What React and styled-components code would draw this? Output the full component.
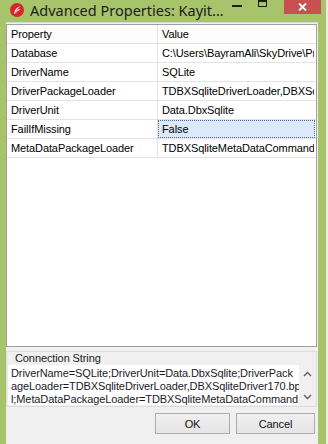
import React from "react";
import styled, { createGlobalStyle } from "styled-components";

const GlobalStyle = createGlobalStyle`
  html, body {
    margin: 0;
    padding: 0;
    background: #ececec;
  }
  #root {
    width: 328px;
    height: 444px;
    overflow: hidden;
  }
`;

const rows = [
  ["Database", "C:\\Users\\BayramAli\\SkyDrive\\Projects\\Kayit\\kayit.sqlite"],
  ["DriverName", "SQLite"],
  ["DriverPackageLoader", "TDBXSqliteDriverLoader,DBXSqliteDriver170.bpl"],
  ["DriverUnit", "Data.DbxSqlite"],
  ["FailIfMissing", "False", true],
  ["MetaDataPackageLoader", "TDBXSqliteMetaDataCommandFactory,DbxSqliteDriver170.bpl"],
];

const connLines = [
  "DriverName=SQLite;DriverUnit=Data.DbxSqlite;DriverPack",
  "ageLoader=TDBXSqliteDriverLoader,DBXSqliteDriver170.bp",
  "l;MetaDataPackageLoader=TDBXSqliteMetaDataCommand",
];

export default function App() {
  return (
    <>
      <GlobalStyle />
      <Window>
        <TitleBar>
          <AppIcon>
            <svg width="14" height="14" viewBox="0 0 14 14">
              <circle cx="7" cy="7" r="7" fill="#d7262b" />
              <path d="M4 11 C4.5 7 6.5 4.2 10.5 3 C9 4.5 8 5.5 7.6 6.6 C8.6 6.2 9.6 6 10.4 6.2 C9 7 7.6 8 6.4 9.6 C6 10.2 5.2 10.8 4 11 Z" fill="#fff" />
              <path d="M5 10.6 L8.8 4.6" stroke="#d7262b" strokeWidth="0.7" fill="none" />
            </svg>
          </AppIcon>
          <Title>Advanced Properties: Kayit...</Title>
          <Controls>
            <CtlBtn><MinGlyph /></CtlBtn>
            <CtlBtn><MaxGlyph /></CtlBtn>
            <CloseBtn>
              <svg width="9" height="8" viewBox="0 0 9 8">
                <path d="M1 0.5 L8 7.5 M8 0.5 L1 7.5" stroke="#fff" strokeWidth="1.8" />
              </svg>
            </CloseBtn>
          </Controls>
        </TitleBar>
        <Client>
          <Grid>
            <Row $header>
              <NameCell>Property</NameCell>
              <ValueCell>Value</ValueCell>
            </Row>
            {rows.map(([name, value, selected]) => (
              <Row key={name}>
                <NameCell>{name}</NameCell>
                <ValueCell $selected={selected}>{value}</ValueCell>
              </Row>
            ))}
          </Grid>
          <ConnBox>
            <ConnLabel>Connection String</ConnLabel>
            <MemoWrap>
              <Memo>
                {connLines.map((l) => (
                  <MemoLine key={l}>{l}</MemoLine>
                ))}
              </Memo>
              <ScrollBar>
                <svg width="9" height="6" viewBox="0 0 9 6">
                  <path d="M1 5 L4.5 1.5 L8 5" stroke="#606060" strokeWidth="1.4" fill="none" />
                </svg>
                <svg width="9" height="6" viewBox="0 0 9 6">
                  <path d="M1 1 L4.5 4.5 L8 1" stroke="#606060" strokeWidth="1.4" fill="none" />
                </svg>
              </ScrollBar>
            </MemoWrap>
          </ConnBox>
          <ButtonRow>
            <Button>OK</Button>
            <Button $wide>Cancel</Button>
          </ButtonRow>
        </Client>
      </Window>
    </>
  );
}

const Window = styled.div`
  width: 326px;
  height: 444px;
  background: #a7c46b;
  display: flex;
  flex-direction: column;
  padding: 0 8px 0 6px;
  box-sizing: border-box;
`;

const TitleBar = styled.div`
  height: 22px;
  display: flex;
  align-items: flex-start;
  flex-shrink: 0;
`;

const AppIcon = styled.div`
  margin: 3px 0 0 4px;
  width: 14px;
  height: 14px;
  display: flex;
`;

const Title = styled.div`
  margin: 0 0 0 6px;
  font-family: "Noto Sans", sans-serif;
  font-size: 14.5px;
  line-height: 20px;
  color: #202020;
  white-space: nowrap;
`;

const Controls = styled.div`
  margin-left: auto;
  display: flex;
  align-items: flex-start;
  margin-right: -1px;
`;

const CtlBtn = styled.div`
  width: 26px;
  height: 14px;
  display: flex;
  justify-content: center;
  align-items: flex-start;
`;

const MinGlyph = styled.div`
  width: 10px;
  height: 2px;
  margin-top: 5px;
  background: #1c1c1c;
`;

const MaxGlyph = styled.div`
  width: 7px;
  height: 4px;
  border: 1px solid #1c1c1c;
  border-top-width: 2px;
`;

const CloseBtn = styled.div`
  width: 37px;
  height: 14px;
  margin-left: 8px;
  background: #c75050;
  display: flex;
  justify-content: center;
  align-items: center;
`;

const Client = styled.div`
  flex: 1;
  background: #f0f0f0;
  border-top: 1px solid #d8d8d8;
  display: flex;
  flex-direction: column;
  padding: 1px 1px 0 0;
  font-family: "Liberation Sans", Arial, sans-serif;
  font-size: 11px;
  letter-spacing: -0.1px;
  color: #000;
`;

const Grid = styled.div`
  height: 323px;
  background: #fff;
  border: 1px solid #a0a0a0;
  box-sizing: border-box;
  display: flex;
  flex-direction: column;
  overflow: hidden;
`;

const Row = styled.div`
  display: grid;
  grid-template-columns: 151px 1fr;
  height: 19px;
  border-bottom: 1px solid #e3e3e3;
  box-sizing: border-box;
  flex-shrink: 0;
  background: ${(p) => (p.$header ? "#fdfdfd" : "#fff")};
`;

const NameCell = styled.div`
  padding: 0 0 0 4px;
  line-height: 18px;
  border-right: 1px solid #e3e3e3;
  white-space: nowrap;
  overflow: hidden;
`;

const ValueCell = styled.div`
  padding: 0 0 0 3px;
  margin: 0 1px 0 0;
  line-height: 16px;
  white-space: nowrap;
  overflow: hidden;
  border: 1px solid transparent;
  ${(p) =>
    p.$selected &&
    `
    background: #dbe9fa;
    border: 1px dotted #4a6a9a;
  `}
`;

const ConnBox = styled.div`
  margin: 4px 0 0 0;
  border: 1px solid #dcdcdc;
  display: flex;
  flex-direction: column;
  padding: 0 0 1px 1px;
`;

const ConnLabel = styled.div`
  padding: 0 0 0 7px;
  line-height: 12px;
  height: 12px;
  color: #222;
`;

const MemoWrap = styled.div`
  display: flex;
  height: 40px;
  margin-top: 1px;
`;

const Memo = styled.div`
  width: 291px;
  background: #fff;
  padding: 2px 0 0 3px;
  box-sizing: border-box;
  color: #1a1a2a;
  overflow: hidden;
`;

const MemoLine = styled.div`
  line-height: 13px;
  white-space: nowrap;
`;

const ScrollBar = styled.div`
  flex: 1;
  display: flex;
  flex-direction: column;
  justify-content: space-between;
  align-items: center;
  padding: 6px 0 5px;
`;

const ButtonRow = styled.div`
  display: flex;
  justify-content: flex-end;
  gap: 6px;
  padding: 6px 2px 0 0;
`;

const Button = styled.div`
  width: ${(p) => (p.$wide ? "79px" : "75px")};
  height: 21px;
  box-sizing: border-box;
  border: 1px solid #acacac;
  background: linear-gradient(#f0f0f0, #e5e5e5);
  display: flex;
  align-items: center;
  justify-content: center;
  color: #111;
`;
